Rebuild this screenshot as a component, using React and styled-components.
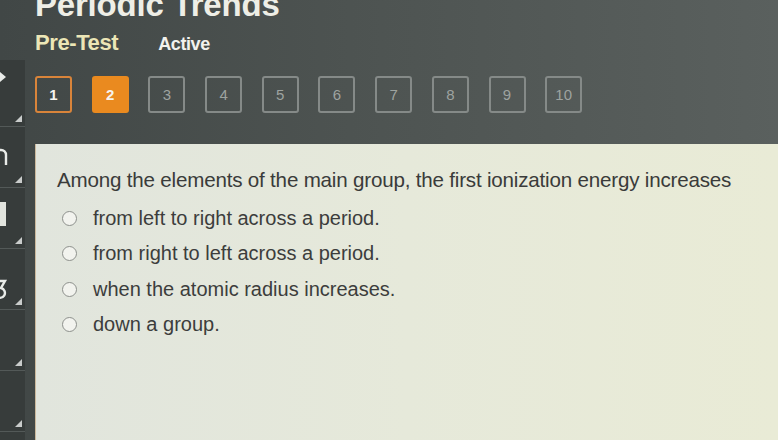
import React from "react";
import styled, { createGlobalStyle } from "styled-components";

const Global = createGlobalStyle`
  html, body { margin: 0; padding: 0; }
  body {
    width: 778px; height: 440px; overflow: hidden;
    background: linear-gradient(90deg, #414746 0%, #4d5351 45%, #5a605e 100%);
    font-family: "Liberation Sans", Arial, sans-serif;
  }
`;

const Page = styled.div`
  width: 778px; height: 440px; display: flex; flex-direction: column; overflow: hidden;
`;

const Header = styled.header`
  padding-left: 35px; display: flex; flex-direction: column; height: 60px;
`;

const Title = styled.h1`
  margin: -11px 0 0 0; font-size: 33px; line-height: 32px; font-weight: 700;
  color: #eeeee6; letter-spacing: -0.2px;
`;

const Tabs = styled.div`
  display: flex; align-items: baseline; gap: 40px; margin-top: 9px;
`;

const Tab = styled.span`
  font-weight: 700; font-size: ${p => p.$size}px; color: ${p => p.$color};
  letter-spacing: -0.4px;
`;

const Body = styled.div`
  flex: 1; display: flex;
`;

const Sidebar = styled.nav`
  width: 25px; margin-right: 10px; display: flex; flex-direction: column;
  background: #373c3b;
`;

const Tile = styled.div`
  position: relative; height: ${p => p.$h}px; flex: none; overflow: hidden;
  border-bottom: 1px solid #535958; box-sizing: border-box;
  &::after {
    content: ""; position: absolute; right: 3px; bottom: 4px;
    border-style: solid; border-width: 0 0 7px 7px;
    border-color: transparent transparent #c9cccb transparent;
  }
`;

const TileIcon = styled.svg`
  position: absolute; left: 0; top: ${p => p.$top}px;
`;

const Main = styled.main`
  flex: 1; display: flex; flex-direction: column;
`;

const Numbers = styled.div`
  display: flex; gap: 19.7px; padding: 16px 0 0 0; height: 84px; box-sizing: border-box;
`;

const NumBtn = styled.div`
  width: 37px; height: 37px; box-sizing: border-box; border-radius: 3px;
  display: flex; align-items: center; justify-content: center;
  font-size: 15px;
  font-weight: ${p => (p.$state === "idle" ? 400 : 700)};
  color: ${p => (p.$state === "idle" ? "#9ea3a0" : "#f6f4ee")};
  background: ${p => (p.$state === "current" ? "#ea8a1f" : "transparent")};
  border: 2px solid ${p =>
    p.$state === "current" ? "#ea8a1f" : p.$state === "done" ? "#d9843a" : "#858a88"};
`;

const Panel = styled.section`
  flex: 1; background: linear-gradient(90deg, #e1e5dd 0%, #e6e9da 50%, #e9ebd6 100%);
  border-left: 1px solid #cbb89c; padding: 24px 0 0 21px; color: #3a3b3a;
`;

const Question = styled.p`
  margin: 0 0 14px 0; font-size: 20.6px; line-height: 24px; letter-spacing: -0.2px;
`;

const Options = styled.ul`
  list-style: none; margin: 0; padding: 0 0 0 5px; display: flex; flex-direction: column; gap: 11.5px;
`;

const Option = styled.li`
  display: flex; align-items: center; gap: 16px; height: 24px;
  font-size: 20px; letter-spacing: 0px; color: #3c3d3c;
`;

const Radio = styled.span`
  width: 15px; height: 15px; box-sizing: border-box; border-radius: 50%;
  border: 1.5px solid #8d908c; background: #f2f3ee; flex: none;
`;

const options = [
  "from left to right across a period.",
  "from right to left across a period.",
  "when the atomic radius increases.",
  "down a group.",
];

export default function App() {
  const nums = Array.from({ length: 10 }, (_, i) => i + 1);
  return (
    <Page>
      <Global />
      <Header>
        <Title>Periodic Trends</Title>
        <Tabs>
          <Tab $size={22} $color="#ece6b6">Pre-Test</Tab>
          <Tab $size={18} $color="#f2f2ee">Active</Tab>
        </Tabs>
      </Header>
      <Body>
        <Sidebar>
          <Tile $h={67}>
            <TileIcon $top={10} width="8" height="14" viewBox="0 0 8 14">
              <path d="M0 2 L6 7 L0 12 Z" fill="#e9ece9" />
            </TileIcon>
          </Tile>
          <Tile $h={61}>
            <TileIcon $top={20} width="8" height="20" viewBox="0 0 8 20">
              <path d="M-4 18 V8 A5 5 0 0 1 6 8 V18" fill="none" stroke="#e9ece9" strokeWidth="2.4" />
            </TileIcon>
          </Tile>
          <Tile $h={61}>
            <TileIcon $top={14} width="8" height="26" viewBox="0 0 8 26">
              <rect x="0" y="0" width="6" height="24" fill="#e1e4de" />
            </TileIcon>
          </Tile>
          <Tile $h={61}>
            <TileIcon $top={30} width="8" height="22" viewBox="0 0 8 22">
              <path d="M-3 2 H5 L1 9 A5 5 0 1 1 -4 17" fill="none" stroke="#e9ece9" strokeWidth="2.4" />
            </TileIcon>
          </Tile>
          <Tile $h={61} />
          <Tile $h={61} />
        </Sidebar>
        <Main>
          <Numbers>
            {nums.map(n => (
              <NumBtn key={n} $state={n === 1 ? "done" : n === 2 ? "current" : "idle"}>
                {n}
              </NumBtn>
            ))}
          </Numbers>
          <Panel>
            <Question>
              Among the elements of the main group, the first ionization energy increases
            </Question>
            <Options>
              {options.map(o => (
                <Option key={o}>
                  <Radio />
                  {o}
                </Option>
              ))}
            </Options>
          </Panel>
        </Main>
      </Body>
    </Page>
  );
}
